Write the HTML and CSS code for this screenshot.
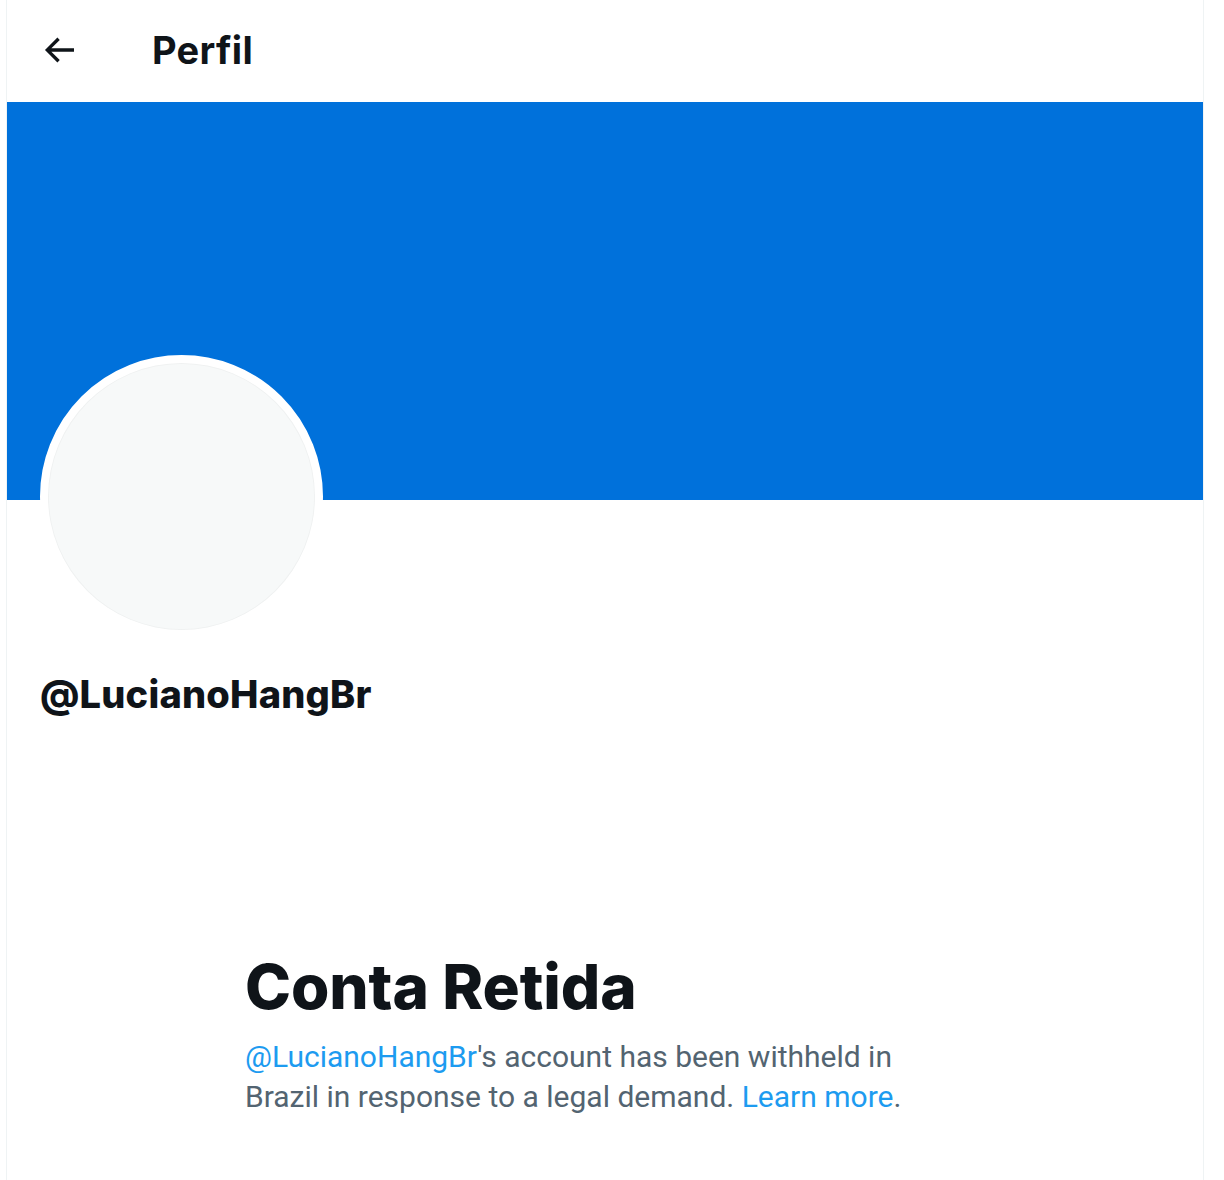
FILE: index.html
```html
<!DOCTYPE html>
<html lang="pt">
<head>
  <meta charset="UTF-8" />
  <title>Perfil</title>
  <meta name="viewport" content="width=device-width, initial-scale=1.0" />
  <link rel="stylesheet" href="styles.css">
</head>
<body>

  <div class="page">
    <header class="topbar">
      <button class="back" aria-label="Voltar">
        <svg viewBox="0 0 24 24" width="40" height="40">
          <path d="M7.414 13l5.043 5.04-1.414 1.42L3.586 12l7.457-7.46 1.414 1.42L7.414 11H21v2H7.414z"></path>
        </svg>
      </button>
      <h2 class="title">Perfil</h2>
    </header>

    <div class="banner"></div>

    <div class="profile">
      <div class="avatar">
        <div class="avatar-inner"></div>
      </div>
      <div class="handle">@LucianoHangBr</div>
    </div>

    <div class="withheld">
      <h1>Conta Retida</h1>
      <p>
        <a href="#">@LucianoHangBr</a>'s account has been withheld in Brazil in response to a legal demand. <a href="#">Learn more</a>.
      </p>
    </div>
  </div>

</body>
</html>
```

FILE: styles.css
```css
body {
  margin: 0;
  background-color: #fff;
  color: #0f1419;
  font-family: Inter, "Liberation Sans", Arial, sans-serif;
}

.page {
  margin-left: 6px;
  width: 1196px;
  min-height: 1180px;
  border-left: 1px solid #eff3f4;
  border-right: 1px solid #eff3f4;
}

.topbar {
  height: 102px;
  display: flex;
  align-items: center;
  padding-left: 30px;
  padding-bottom: 2px;
  box-sizing: border-box;
}

.back {
  width: 44px;
  height: 44px;
  padding: 0;
  border: none;
  background: none;
  display: flex;
  align-items: center;
  justify-content: center;
}

.back svg {
  fill: #0f1419;
}

.title {
  margin: 0 0 0 71px;
  font-size: 38px;
  font-weight: 700;
  letter-spacing: 0.3px;
}

.banner {
  height: 398px;
  background-color: #0071db;
}

.profile {
  padding-left: 33px;
}

.avatar {
  width: 267px;
  height: 267px;
  margin-top: -145px;
  border: 8px solid #fff;
  border-radius: 50%;
  background-color: #fff;
}

.avatar-inner {
  width: 100%;
  height: 100%;
  border-radius: 50%;
  background-color: #f7f9f9;
  box-shadow: inset 0 0 0 1px rgba(0, 0, 0, 0.03);
}

.handle {
  margin-top: 33px;
  font-size: 38px;
  font-weight: 800;
  letter-spacing: 0.2px;
}

.withheld {
  margin-top: 232px;
  padding-left: 238px;
  width: 670px;
}

.withheld h1 {
  margin: 0;
  font-size: 62px;
  font-weight: 800;
  letter-spacing: -0.1px;
  line-height: 76px;
}

.withheld p {
  margin: 12px 0 0;
  font-family: Roboto, "Liberation Sans", Arial, sans-serif;
  font-size: 30px;
  line-height: 40px;
  color: #536471;
}

.withheld a {
  color: #1d9bf0;
  text-decoration: none;
}
```
